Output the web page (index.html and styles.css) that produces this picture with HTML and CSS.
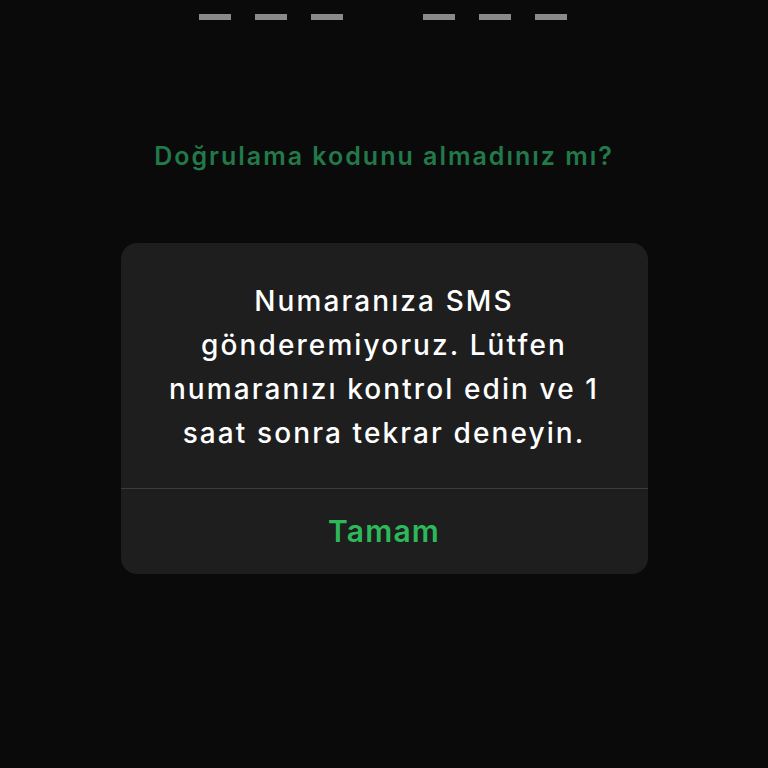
FILE: index.html
```html
<!DOCTYPE html>
<html lang="tr">
<head>
<meta charset="utf-8">
<link rel="stylesheet" href="styles.css">
</head>
<body>
<div class="screen">
  <div class="code-row">
    <div class="group"><span class="dash"></span><span class="dash"></span><span class="dash"></span></div>
    <div class="group"><span class="dash"></span><span class="dash"></span><span class="dash"></span></div>
  </div>
  <div class="resend">Doğrulama kodunu almadınız mı?</div>
  <div class="alert">
    <div class="message">Numaranıza SMS<br>gönderemiyoruz. Lütfen<br>numaranızı kontrol edin ve 1<br>saat sonra tekrar deneyin.</div>
    <div class="action">Tamam</div>
  </div>
</div>
</body>
</html>
```
FILE: styles.css
```css
html, body {
  margin: 0;
  padding: 0;
  background: #0a0a0a;
}
.screen {
  width: 768px;
  height: 768px;
  display: flex;
  flex-direction: column;
  align-items: center;
  font-family: Inter, "Noto Sans", sans-serif;
}
.code-row {
  display: flex;
  gap: 80px;
  margin-top: 14px;
  margin-right: 3px;
}
.group {
  display: flex;
  gap: 24px;
}
.dash {
  display: block;
  width: 32px;
  height: 6px;
  background: #8a8a8a;
}
.resend {
  margin-top: 121px;
  color: #22794a;
  font-size: 25px;
  font-weight: 600;
  line-height: 30px;
  letter-spacing: 2px;
}
.alert {
  margin-top: 72px;
  width: 527px;
  background: #1e1e1e;
  border-radius: 16px;
  display: flex;
  flex-direction: column;
  overflow: hidden;
}
.message {
  color: #ffffff;
  text-align: center;
  font-size: 28px;
  font-weight: 500;
  line-height: 44px;
  letter-spacing: 2.1px;
  padding: 36px 10px 33px;
  border-bottom: 1px solid #3c3c3c;
}
.action {
  color: #2db85a;
  text-align: center;
  font-size: 30px;
  font-weight: 600;
  letter-spacing: 1.2px;
  height: 85px;
  line-height: 85px;
}
```
